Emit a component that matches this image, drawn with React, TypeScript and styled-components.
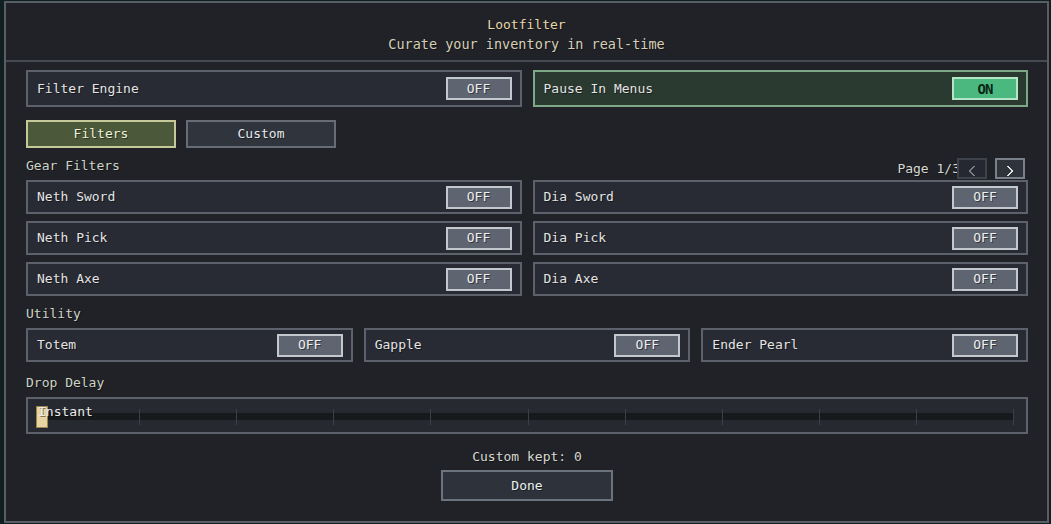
import React from "react";
import styled, { createGlobalStyle } from "styled-components";

const GlobalStyle = createGlobalStyle`
  html, body {
    margin: 0;
    padding: 0;
    background: #0f201e;
    width: 1051px;
    height: 524px;
    overflow: hidden;
  }
  * { box-sizing: border-box; }
`;

const FONT = `"DejaVu Sans Mono", "Liberation Mono", monospace`;

const Window = styled.div`
  margin: 1px 2px 0 4px;
  width: 1045px;
  height: 522px;
  background: #202228;
  border: 2px solid #595e66;
  font-family: ${FONT};
  font-size: 13px;
  line-height: 16px;
  color: #e4e4e4;
  text-shadow: 1px 1px 0 rgba(0, 0, 0, 0.45);
  display: flex;
  flex-direction: column;
`;

const Header = styled.header`
  padding: 14px 0 8px;
  display: flex;
  flex-direction: column;
  align-items: center;
  gap: 3px;
  border-bottom: 2px solid #464a52;
`;

const Title = styled.div`
  color: #e8d9a8;
`;

const Subtitle = styled.div`
  color: #d6cfb6;
  font-size: 13.5px;
`;

const Body = styled.main`
  padding: 8px 19px 0 20px;
  display: flex;
  flex-direction: column;
`;

const Grid = styled.div<{ $cols: number; $gap?: number }>`
  display: grid;
  grid-template-columns: repeat(${(p) => p.$cols}, 1fr);
  column-gap: 11px;
  row-gap: ${(p) => p.$gap ?? 7}px;
`;

const Row = styled.div<{ $h: number; $active?: boolean }>`
  height: ${(p) => p.$h}px;
  display: flex;
  align-items: center;
  justify-content: space-between;
  padding: 0 8px 0 9px;
  background: ${(p) => (p.$active ? "#2b3a30" : "#282b33")};
  border: 2px solid ${(p) => (p.$active ? "#7da888" : "#5c616b")};
`;

const Toggle = styled.div<{ $on?: boolean }>`
  width: 66px;
  height: 23px;
  display: flex;
  align-items: center;
  justify-content: center;
  background: ${(p) => (p.$on ? "#4bb97f" : "#5e6470")};
  border: 2px solid ${(p) => (p.$on ? "#b6e4c6" : "#c3c7ce")};
  color: ${(p) => (p.$on ? "#0d2618" : "#eeeeee")};
  font-weight: ${(p) => (p.$on ? 700 : 400)};
  font-size: ${(p) => (p.$on ? "14px" : "13px")};
  text-shadow: ${(p) => (p.$on ? "none" : "1px 1px 0 rgba(0,0,0,0.45)")};
  letter-spacing: ${(p) => (p.$on ? "-1px" : "0")};
`;

const Tabs = styled.div`
  margin-top: 13px;
  display: flex;
  gap: 10px;
`;

const Tab = styled.div<{ $active?: boolean }>`
  width: 150px;
  height: 28px;
  display: flex;
  align-items: center;
  justify-content: center;
  background: ${(p) => (p.$active ? "#4b5839" : "#2f343d")};
  border: 2px solid ${(p) => (p.$active ? "#c5c99a" : "#676d77")};
  color: ${(p) => (p.$active ? "#eef0dc" : "#e6e8ec")};
`;

const SectionHead = styled.div<{ $top: number }>`
  margin-top: ${(p) => p.$top}px;
  margin-bottom: 6px;
  display: flex;
  align-items: flex-start;
  justify-content: space-between;
`;

const SectionLabel = styled.div`
  color: #cdd4c4;
`;

const Pager = styled.div`
  display: flex;
  align-items: center;
  height: 21px;
  margin-right: 3px;
  margin-bottom: -5px;
`;

const PageText = styled.span`
  color: #d8d8d0;
  margin-right: -3px;
  margin-top: 1px;
`;

const PageButton = styled.div<{ $enabled?: boolean }>`
  width: 30px;
  height: 21px;
  margin-left: ${(p) => (p.$enabled ? 8 : 0)}px;
  display: flex;
  align-items: flex-end;
  justify-content: center;
  background: ${(p) => (p.$enabled ? "#2e333c" : "#252830")};
  border: 2px solid ${(p) => (p.$enabled ? "#7a808a" : "#3d424b")};
  color: ${(p) => (p.$enabled ? "#e0e2e6" : "#7c8088")};
  padding-bottom: 0;
`;

const Chevron: React.FC<{ dir: "left" | "right" }> = ({ dir }) => (
  <svg width="8" height="12" viewBox="0 0 8 12" shapeRendering="crispEdges">
    <polyline
      points={dir === "left" ? "6,1 2,6 6,11" : "2,1 6,6 2,11"}
      fill="none"
      stroke="currentColor"
      strokeWidth="1.5"
    />
  </svg>
);

const Slider = styled.div`
  height: 37px;
  background: #262930;
  border: 2px solid #5c616b;
  padding: 0 12px 0 8px;
  display: flex;
  align-items: center;
`;

const Track = styled.div`
  position: relative;
  flex: 1;
  height: 7px;
  margin-top: 1px;
  background: #17191d;
`;

const Tick = styled.span`
  position: absolute;
  top: -4px;
  width: 1px;
  height: 16px;
  background: #3b3f47;
`;

const Handle = styled.span`
  position: absolute;
  left: 0;
  top: -7px;
  width: 12px;
  height: 22px;
  background: #e6d4a2;
  border: 1px solid #9c8450;
`;

const SliderText = styled.span`
  position: absolute;
  left: 2px;
  top: -9px;
  color: #ececec;
`;

const Footer = styled.footer`
  margin-top: 15px;
  display: flex;
  flex-direction: column;
  align-items: center;
  gap: 5px;
`;

const FooterNote = styled.div`
  color: #d9d9cf;
`;

const DoneButton = styled.div`
  width: 172px;
  height: 31px;
  display: flex;
  align-items: center;
  justify-content: center;
  background: #2e333b;
  border: 2px solid #6d737d;
  color: #eceef0;
`;

const gear = [
  ["Neth Sword", "Dia Sword"],
  ["Neth Pick", "Dia Pick"],
  ["Neth Axe", "Dia Axe"],
];

const utility = ["Totem", "Gapple", "Ender Pearl"];

const TICKS = 11;

export default function App() {
  return (
    <>
      <GlobalStyle />
      <Window>
        <Header>
          <Title>Lootfilter</Title>
          <Subtitle>Curate your inventory in real-time</Subtitle>
        </Header>
        <Body>
          <Grid $cols={2}>
            <Row $h={37}>
              <span>Filter Engine</span>
              <Toggle>OFF</Toggle>
            </Row>
            <Row $h={37} $active>
              <span>Pause In Menus</span>
              <Toggle $on>ON</Toggle>
            </Row>
          </Grid>

          <Tabs>
            <Tab $active>Filters</Tab>
            <Tab>Custom</Tab>
          </Tabs>

          <SectionHead $top={10}>
            <SectionLabel>Gear Filters</SectionLabel>
            <Pager>
              <PageText>Page 1/3</PageText>
              <PageButton>
                <Chevron dir="left" />
              </PageButton>
              <PageButton $enabled>
                <Chevron dir="right" />
              </PageButton>
            </Pager>
          </SectionHead>

          <Grid $cols={2}>
            {gear.flat().map((name) => (
              <Row key={name} $h={34}>
                <span>{name}</span>
                <Toggle>OFF</Toggle>
              </Row>
            ))}
          </Grid>

          <SectionHead $top={10}>
            <SectionLabel>Utility</SectionLabel>
          </SectionHead>
          <Grid $cols={3}>
            {utility.map((name) => (
              <Row key={name} $h={34}>
                <span>{name}</span>
                <Toggle>OFF</Toggle>
              </Row>
            ))}
          </Grid>

          <SectionHead $top={13}>
            <SectionLabel>Drop Delay</SectionLabel>
          </SectionHead>
          <Slider>
            <Track>
              {Array.from({ length: TICKS }, (_, i) => (
                <Tick
                  key={i}
                  style={{ left: `calc(6px + (100% - 7px) * ${i / (TICKS - 1)})` }}
                />
              ))}
              <Handle />
              <SliderText>Instant</SliderText>
            </Track>
          </Slider>

          <Footer>
            <FooterNote>Custom kept: 0</FooterNote>
            <DoneButton>Done</DoneButton>
          </Footer>
        </Body>
      </Window>
    </>
  );
}
